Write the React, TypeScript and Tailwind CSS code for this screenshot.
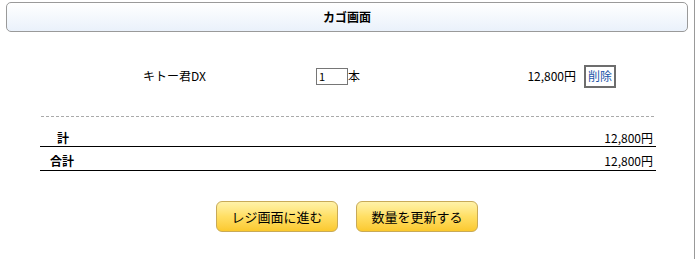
export default function App() {
  const font = { fontFamily: '"Noto Sans CJK JP", "Liberation Sans", sans-serif' };
  return (
    <div className="w-[699px] h-[259px] bg-white text-[12px] text-black" style={font}>
      <div className="w-[695px] h-[259px] border-r border-[#999] pt-[2px]">
        {/* header */}
        <div className="mx-[6px] h-[30px] rounded-[5px] border border-[#9a9a9a] bg-gradient-to-b from-white to-[#eaf1fb] flex items-center justify-center">
          <span className="font-bold text-[12px] leading-none">カゴ画面</span>
        </div>

        {/* item row */}
        <div className="flex items-center h-[24px] mt-[32px]">
          <div className="w-[316px] pl-[143px] leading-none">キトー君DX</div>
          <div className="w-[32px] h-[17px] border border-[#767676] text-[11px] leading-[15px] pl-[2px]">1</div>
          <div className="leading-none">本</div>
          <div className="w-[216px] text-right leading-none">12,800円</div>
          <div className="ml-[8px] w-[32px] h-[23px] border-2 border-[#6d6d6d] bg-white text-[#1a53a8] flex items-center justify-center leading-none">
            削除
          </div>
        </div>

        {/* totals */}
        <div className="mx-[40px] w-[616px] mt-[28px]">
          <div className="border-t border-dashed border-[#aaa] ml-[1px] w-[613px]" />
          <div className="h-[30px] flex items-end justify-between border-b border-black pb-[2px]">
            <span className="pl-[17px] font-bold leading-none">計</span>
            <span className="pr-[3px] leading-none">12,800円</span>
          </div>
          <div className="h-[24px] flex items-end justify-between border-b border-black pb-[3px]">
            <span className="pl-[10px] font-bold leading-none">合計</span>
            <span className="pr-[3px] leading-none">12,800円</span>
          </div>
        </div>

        {/* buttons */}
        <div className="flex gap-[18px] pl-[216px] mt-[30px]">
          <div className="w-[122px] h-[31px] rounded-[6px] border border-[#c8aa58] bg-gradient-to-b from-[#fff2a8] via-[#ffdf63] to-[#fbc92c] flex items-center justify-center text-[13px] leading-none">
            レジ画面に進む
          </div>
          <div className="w-[122px] h-[31px] rounded-[6px] border border-[#c8aa58] bg-gradient-to-b from-[#fff2a8] via-[#ffdf63] to-[#fbc92c] flex items-center justify-center text-[13px] leading-none">
            数量を更新する
          </div>
        </div>
      </div>
    </div>
  );
}
